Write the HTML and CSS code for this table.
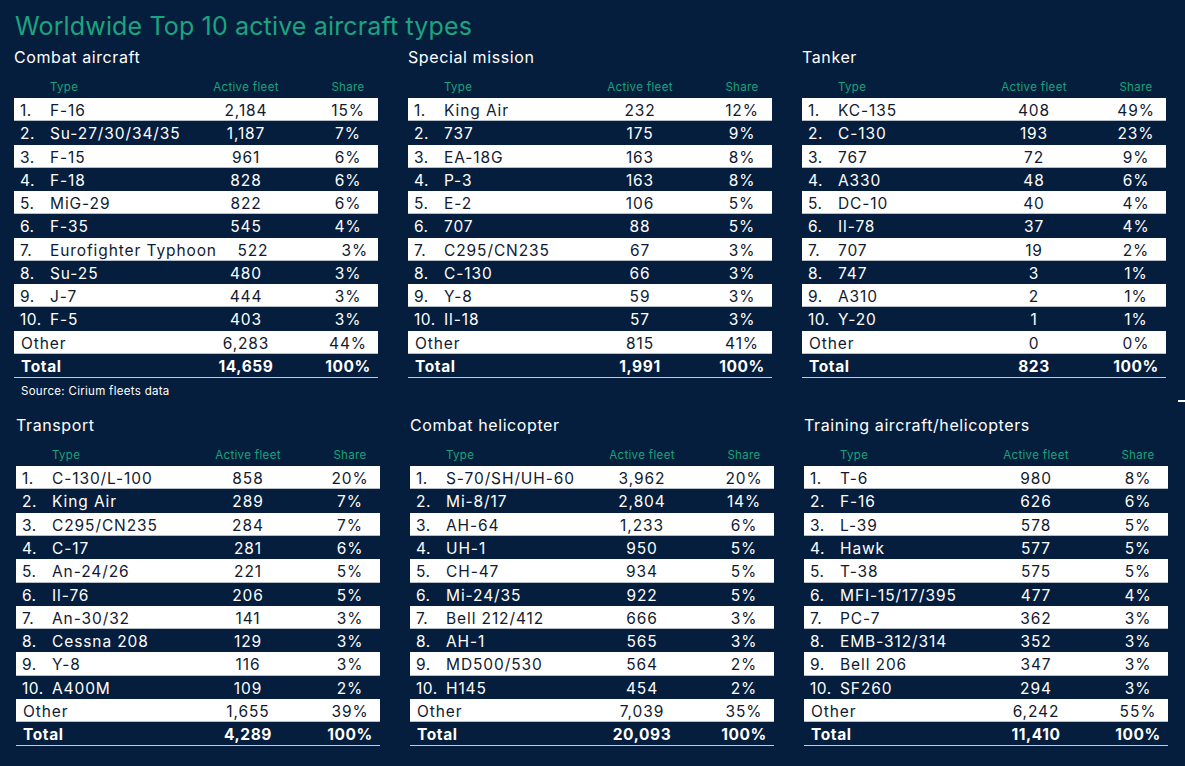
FILE: index.html
```html
<!DOCTYPE html>
<html>
<head>
<meta charset="utf-8">
<link rel="stylesheet" href="styles.css">
</head>
<body>
<div class="page">
  <h1 class="title">Worldwide Top 10 active aircraft types</h1>
  <div class="band top">
    <section class="panel">
      <h2 class="heading">Combat aircraft</h2>
      <div class="cols"><span class="t">Type</span><span class="f">Active fleet</span><span class="s">Share</span></div>
      <div class="tbl">
        <div class="row"><span class="n">1.</span><span class="t">F-16</span><span class="f">2,184</span><span class="s">15%</span></div>
        <div class="row"><span class="n">2.</span><span class="t">Su-27/30/34/35</span><span class="f">1,187</span><span class="s">7%</span></div>
        <div class="row"><span class="n">3.</span><span class="t">F-15</span><span class="f">961</span><span class="s">6%</span></div>
        <div class="row"><span class="n">4.</span><span class="t">F-18</span><span class="f">828</span><span class="s">6%</span></div>
        <div class="row"><span class="n">5.</span><span class="t">MiG-29</span><span class="f">822</span><span class="s">6%</span></div>
        <div class="row"><span class="n">6.</span><span class="t">F-35</span><span class="f">545</span><span class="s">4%</span></div>
        <div class="row"><span class="n">7.</span><span class="t">Eurofighter Typhoon</span><span class="f">522</span><span class="s">3%</span></div>
        <div class="row"><span class="n">8.</span><span class="t">Su-25</span><span class="f">480</span><span class="s">3%</span></div>
        <div class="row"><span class="n">9.</span><span class="t">J-7</span><span class="f">444</span><span class="s">3%</span></div>
        <div class="row"><span class="n">10.</span><span class="t">F-5</span><span class="f">403</span><span class="s">3%</span></div>
        <div class="row"><span class="lbl">Other</span><span class="f">6,283</span><span class="s">44%</span></div>
        <div class="row total"><span class="lbl">Total</span><span class="f">14,659</span><span class="s">100%</span></div>
      </div>
      <p class="source">Source: Cirium fleets data</p>
    </section>
    <section class="panel">
      <h2 class="heading">Special mission</h2>
      <div class="cols"><span class="t">Type</span><span class="f">Active fleet</span><span class="s">Share</span></div>
      <div class="tbl">
        <div class="row"><span class="n">1.</span><span class="t">King Air</span><span class="f">232</span><span class="s">12%</span></div>
        <div class="row"><span class="n">2.</span><span class="t">737</span><span class="f">175</span><span class="s">9%</span></div>
        <div class="row"><span class="n">3.</span><span class="t">EA-18G</span><span class="f">163</span><span class="s">8%</span></div>
        <div class="row"><span class="n">4.</span><span class="t">P-3</span><span class="f">163</span><span class="s">8%</span></div>
        <div class="row"><span class="n">5.</span><span class="t">E-2</span><span class="f">106</span><span class="s">5%</span></div>
        <div class="row"><span class="n">6.</span><span class="t">707</span><span class="f">88</span><span class="s">5%</span></div>
        <div class="row"><span class="n">7.</span><span class="t">C295/CN235</span><span class="f">67</span><span class="s">3%</span></div>
        <div class="row"><span class="n">8.</span><span class="t">C-130</span><span class="f">66</span><span class="s">3%</span></div>
        <div class="row"><span class="n">9.</span><span class="t">Y-8</span><span class="f">59</span><span class="s">3%</span></div>
        <div class="row"><span class="n">10.</span><span class="t">Il-18</span><span class="f">57</span><span class="s">3%</span></div>
        <div class="row"><span class="lbl">Other</span><span class="f">815</span><span class="s">41%</span></div>
        <div class="row total"><span class="lbl">Total</span><span class="f">1,991</span><span class="s">100%</span></div>
      </div>
    </section>
    <section class="panel">
      <h2 class="heading">Tanker</h2>
      <div class="cols"><span class="t">Type</span><span class="f">Active fleet</span><span class="s">Share</span></div>
      <div class="tbl">
        <div class="row"><span class="n">1.</span><span class="t">KC-135</span><span class="f">408</span><span class="s">49%</span></div>
        <div class="row"><span class="n">2.</span><span class="t">C-130</span><span class="f">193</span><span class="s">23%</span></div>
        <div class="row"><span class="n">3.</span><span class="t">767</span><span class="f">72</span><span class="s">9%</span></div>
        <div class="row"><span class="n">4.</span><span class="t">A330</span><span class="f">48</span><span class="s">6%</span></div>
        <div class="row"><span class="n">5.</span><span class="t">DC-10</span><span class="f">40</span><span class="s">4%</span></div>
        <div class="row"><span class="n">6.</span><span class="t">Il-78</span><span class="f">37</span><span class="s">4%</span></div>
        <div class="row"><span class="n">7.</span><span class="t">707</span><span class="f">19</span><span class="s">2%</span></div>
        <div class="row"><span class="n">8.</span><span class="t">747</span><span class="f">3</span><span class="s">1%</span></div>
        <div class="row"><span class="n">9.</span><span class="t">A310</span><span class="f">2</span><span class="s">1%</span></div>
        <div class="row"><span class="n">10.</span><span class="t">Y-20</span><span class="f">1</span><span class="s">1%</span></div>
        <div class="row"><span class="lbl">Other</span><span class="f">0</span><span class="s">0%</span></div>
        <div class="row total"><span class="lbl">Total</span><span class="f">823</span><span class="s">100%</span></div>
      </div>
    </section>
  </div>
  <div class="band bottom">
    <section class="panel">
      <h2 class="heading">Transport</h2>
      <div class="cols"><span class="t">Type</span><span class="f">Active fleet</span><span class="s">Share</span></div>
      <div class="tbl">
        <div class="row"><span class="n">1.</span><span class="t">C-130/L-100</span><span class="f">858</span><span class="s">20%</span></div>
        <div class="row"><span class="n">2.</span><span class="t">King Air</span><span class="f">289</span><span class="s">7%</span></div>
        <div class="row"><span class="n">3.</span><span class="t">C295/CN235</span><span class="f">284</span><span class="s">7%</span></div>
        <div class="row"><span class="n">4.</span><span class="t">C-17</span><span class="f">281</span><span class="s">6%</span></div>
        <div class="row"><span class="n">5.</span><span class="t">An-24/26</span><span class="f">221</span><span class="s">5%</span></div>
        <div class="row"><span class="n">6.</span><span class="t">Il-76</span><span class="f">206</span><span class="s">5%</span></div>
        <div class="row"><span class="n">7.</span><span class="t">An-30/32</span><span class="f">141</span><span class="s">3%</span></div>
        <div class="row"><span class="n">8.</span><span class="t">Cessna 208</span><span class="f">129</span><span class="s">3%</span></div>
        <div class="row"><span class="n">9.</span><span class="t">Y-8</span><span class="f">116</span><span class="s">3%</span></div>
        <div class="row"><span class="n">10.</span><span class="t">A400M</span><span class="f">109</span><span class="s">2%</span></div>
        <div class="row"><span class="lbl">Other</span><span class="f">1,655</span><span class="s">39%</span></div>
        <div class="row total"><span class="lbl">Total</span><span class="f">4,289</span><span class="s">100%</span></div>
      </div>
    </section>
    <section class="panel">
      <h2 class="heading">Combat helicopter</h2>
      <div class="cols"><span class="t">Type</span><span class="f">Active fleet</span><span class="s">Share</span></div>
      <div class="tbl">
        <div class="row"><span class="n">1.</span><span class="t">S-70/SH/UH-60</span><span class="f">3,962</span><span class="s">20%</span></div>
        <div class="row"><span class="n">2.</span><span class="t">Mi-8/17</span><span class="f">2,804</span><span class="s">14%</span></div>
        <div class="row"><span class="n">3.</span><span class="t">AH-64</span><span class="f">1,233</span><span class="s">6%</span></div>
        <div class="row"><span class="n">4.</span><span class="t">UH-1</span><span class="f">950</span><span class="s">5%</span></div>
        <div class="row"><span class="n">5.</span><span class="t">CH-47</span><span class="f">934</span><span class="s">5%</span></div>
        <div class="row"><span class="n">6.</span><span class="t">Mi-24/35</span><span class="f">922</span><span class="s">5%</span></div>
        <div class="row"><span class="n">7.</span><span class="t">Bell 212/412</span><span class="f">666</span><span class="s">3%</span></div>
        <div class="row"><span class="n">8.</span><span class="t">AH-1</span><span class="f">565</span><span class="s">3%</span></div>
        <div class="row"><span class="n">9.</span><span class="t">MD500/530</span><span class="f">564</span><span class="s">2%</span></div>
        <div class="row"><span class="n">10.</span><span class="t">H145</span><span class="f">454</span><span class="s">2%</span></div>
        <div class="row"><span class="lbl">Other</span><span class="f">7,039</span><span class="s">35%</span></div>
        <div class="row total"><span class="lbl">Total</span><span class="f">20,093</span><span class="s">100%</span></div>
      </div>
    </section>
    <section class="panel">
      <h2 class="heading">Training aircraft/helicopters</h2>
      <div class="cols"><span class="t">Type</span><span class="f">Active fleet</span><span class="s">Share</span></div>
      <div class="tbl">
        <div class="row"><span class="n">1.</span><span class="t">T-6</span><span class="f">980</span><span class="s">8%</span></div>
        <div class="row"><span class="n">2.</span><span class="t">F-16</span><span class="f">626</span><span class="s">6%</span></div>
        <div class="row"><span class="n">3.</span><span class="t">L-39</span><span class="f">578</span><span class="s">5%</span></div>
        <div class="row"><span class="n">4.</span><span class="t">Hawk</span><span class="f">577</span><span class="s">5%</span></div>
        <div class="row"><span class="n">5.</span><span class="t">T-38</span><span class="f">575</span><span class="s">5%</span></div>
        <div class="row"><span class="n">6.</span><span class="t">MFI-15/17/395</span><span class="f">477</span><span class="s">4%</span></div>
        <div class="row"><span class="n">7.</span><span class="t">PC-7</span><span class="f">362</span><span class="s">3%</span></div>
        <div class="row"><span class="n">8.</span><span class="t">EMB-312/314</span><span class="f">352</span><span class="s">3%</span></div>
        <div class="row"><span class="n">9.</span><span class="t">Bell 206</span><span class="f">347</span><span class="s">3%</span></div>
        <div class="row"><span class="n">10.</span><span class="t">SF260</span><span class="f">294</span><span class="s">3%</span></div>
        <div class="row"><span class="lbl">Other</span><span class="f">6,242</span><span class="s">55%</span></div>
        <div class="row total"><span class="lbl">Total</span><span class="f">11,410</span><span class="s">100%</span></div>
      </div>
    </section>
  </div>
  <span class="edge-mark"></span>
</div>
</body>
</html>
```
FILE: styles.css
```css
html, body {
  margin: 0;
  padding: 0;
  background: #061e3d;
}
body {
  font-family: "Inter", "Lato", sans-serif;
  color: #ffffff;
  width: 1185px;
  height: 766px;
  overflow: hidden;
}
.page {
  position: relative;
  padding: 0 0 0 14px;
}
.title {
  margin: 0;
  padding: 11px 0 0 1px;
  height: 34px;
  font-size: 25px;
  font-weight: 400;
  letter-spacing: 0.15px;
  line-height: 30px;
  color: #1ba47f;
  white-space: nowrap;
}
.band {
  display: flex;
  gap: 30px;
}
.band.bottom {
  margin-left: 2px;
  margin-top: 15px;
}
.panel {
  width: 364px;
  flex: 0 0 364px;
}
.heading {
  margin: 0;
  font-size: 16px;
  font-weight: 400;
  letter-spacing: 0.6px;
  line-height: 24px;
  height: 24px;
  padding-left: 0;
  white-space: nowrap;
}
.cols, .row {
  display: grid;
  grid-template-columns: 36px 1fr 72px 96px;
  align-items: center;
  white-space: nowrap;
}
.cols {
  height: 29px;
  padding-top: 7px;
  box-sizing: border-box;
  font-size: 11.5px;
  letter-spacing: 0.35px;
  color: #18a37c;
}
.cols .t { grid-column: 2; }
.f { text-align: center; }
.s { text-align: center; padding-left: 36px; }
.tbl {
  border-bottom: 1px solid #c7cbd2;
}
.row {
  height: 23.27px;
  font-size: 15.5px;
  letter-spacing: 0.9px;
  line-height: 23px;
  padding-top: 1px;
  box-sizing: border-box;
}
.row:nth-child(odd) {
  background: #ffffff;
  color: #111a30;
  box-shadow: inset 0 -1px 0 #b8bec8;
}
.n { padding-left: 6px; letter-spacing: 0.5px; }
.lbl {
  grid-column: 1 / span 2;
  padding-left: 7px;
}
.total {
  font-weight: 700;
  letter-spacing: 0.6px;
}
.source {
  margin: 6px 0 0 7px;
  font-size: 11.5px;
  letter-spacing: 0.3px;
  line-height: 14px;
}
.edge-mark {
  position: absolute;
  left: 1178px;
  top: 400px;
  width: 7px;
  height: 2px;
  background: #ffffff;
}
```
